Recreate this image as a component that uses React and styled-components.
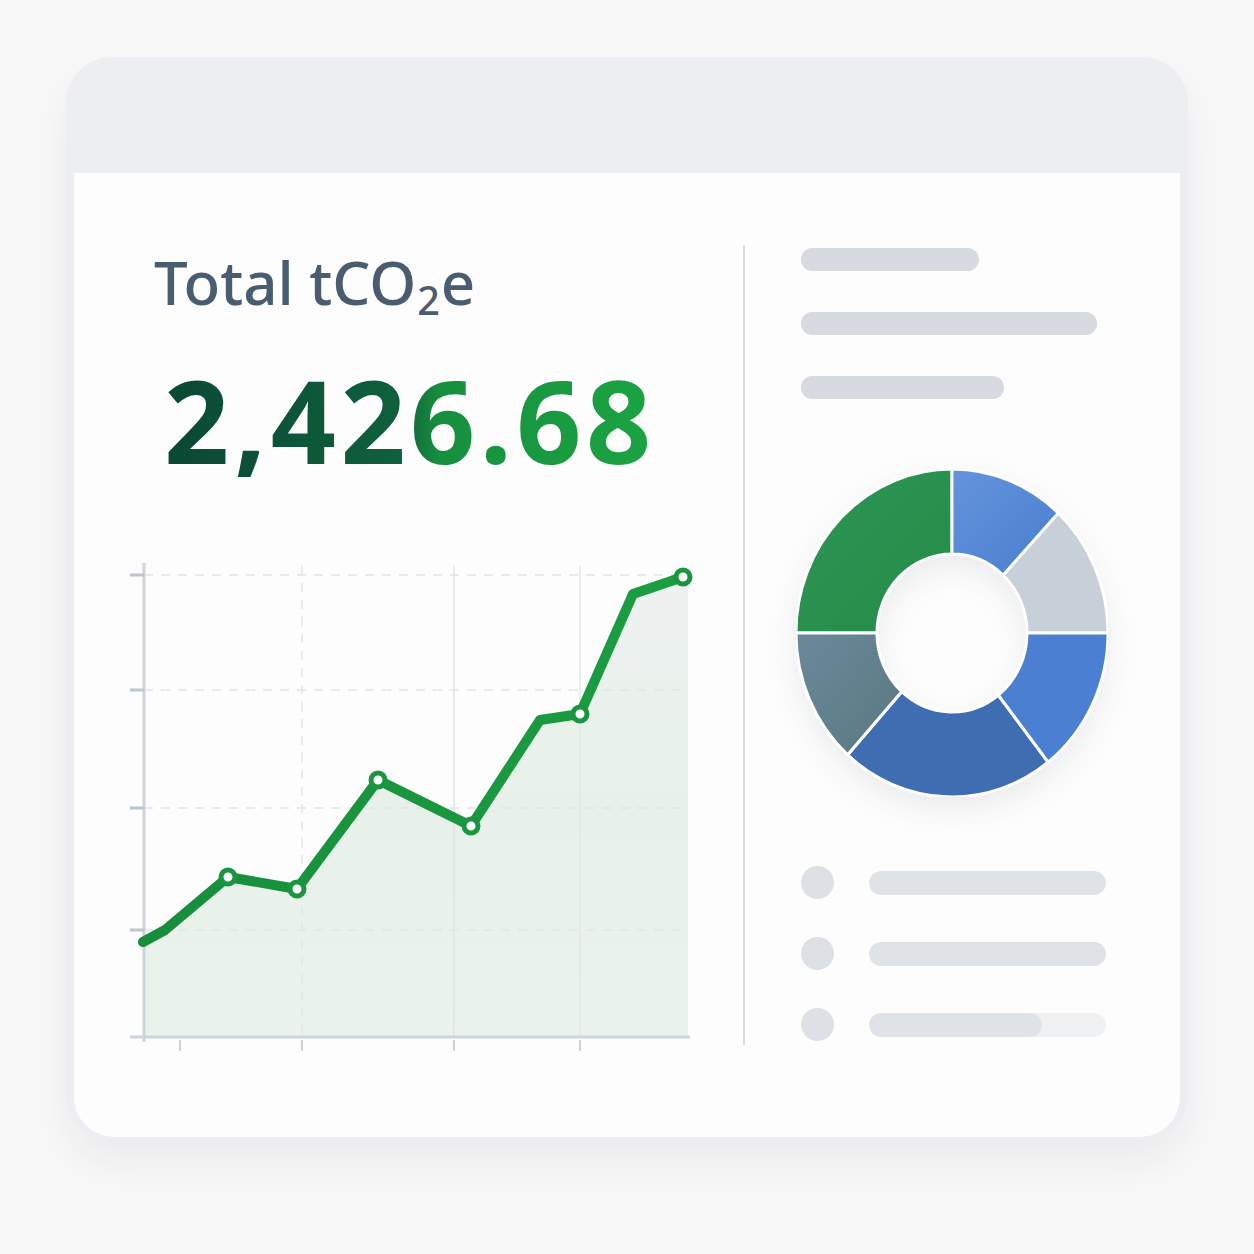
import styled, { createGlobalStyle } from 'styled-components'

const GlobalStyle = createGlobalStyle`
  html, body {
    margin: 0;
    padding: 0;
    background: #f8f8f9;
  }
  body {
    font-family: 'Noto Sans', 'Open Sans', sans-serif;
  }
`

const points = [
  [143, 942], [165, 930], [228, 877], [297, 889], [378, 780],
  [471, 826], [540, 720], [580, 714], [633, 594], [683, 577],
]
const markers = [2, 3, 4, 5, 7, 9]
const gridRows = [575, 690, 808, 930]
const xTicks = [180, 302, 454, 580]

const segments = [
  { from: 270, to: 360, fill: 'url(#segGreen)' },
  { from: 0, to: 43, fill: 'url(#segLight)' },
  { from: 43, to: 90, fill: '#c7cfd8' },
  { from: 90, to: 142, fill: '#4a7fd1' },
  { from: 142, to: 222, fill: '#3e6db2' },
  { from: 222, to: 270, fill: 'url(#segSlate)' },
]

const polar = (r, deg) => {
  const a = (deg * Math.PI) / 180
  return [r * Math.sin(a), -r * Math.cos(a)]
}

const arcPath = (from, to, r1, r2) => {
  const [x1, y1] = polar(r2, from)
  const [x2, y2] = polar(r2, to)
  const [x3, y3] = polar(r1, to)
  const [x4, y4] = polar(r1, from)
  const large = to - from > 180 ? 1 : 0
  return `M${x1} ${y1} A${r2} ${r2} 0 ${large} 1 ${x2} ${y2} L${x3} ${y3} A${r1} ${r1} 0 ${large} 0 ${x4} ${y4} Z`
}

const legend = [
  { fill: 100 },
  { fill: 100 },
  { fill: 73 },
]

const LineChart = () => {
  const line = points.map(p => p.join(',')).join(' ')
  const area = `M143,1036 L${line.replace(/ /g, ' L')} L688,577 L688,1036 Z`
  return (
    <ChartSvg width='580' height='500' viewBox='120 560 580 500'>
      <defs>
        <linearGradient id='areaFill' x1='0' y1='0' x2='0' y2='1'>
          <stop offset='0' stopColor='#eef1f1' />
          <stop offset='0.5' stopColor='#e7f1e9' />
          <stop offset='1' stopColor='#ebf4ec' />
        </linearGradient>
        <linearGradient id='lineStroke' x1='0' y1='0' x2='1' y2='0'>
          <stop offset='0' stopColor='#178d3c' />
          <stop offset='1' stopColor='#1b9e41' />
        </linearGradient>
      </defs>
      <path d={area} fill='url(#areaFill)' />
      {gridRows.map(y => (
        <line key={y} x1='144' y1={y} x2='688' y2={y} stroke='#e1e5e9' strokeWidth='1.5' strokeDasharray='9 8' />
      ))}
      <line x1='302' y1='566' x2='302' y2='1036' stroke='#e1e5e9' strokeWidth='1.5' strokeDasharray='9 8' />
      <line x1='454' y1='566' x2='454' y2='1036' stroke='#dfe3e8' strokeWidth='1.5' />
      <line x1='580' y1='566' x2='580' y2='1036' stroke='#e3e6ea' strokeWidth='1.5' />
      <line x1='144' y1='563' x2='144' y2='1042' stroke='#cdd4db' strokeWidth='3' />
      {gridRows.map(y => (
        <line key={y} x1='130' y1={y} x2='144' y2={y} stroke='#bcc6cc' strokeWidth='3' />
      ))}
      <line x1='130' y1='1037' x2='690' y2='1037' stroke='#cdd4db' strokeWidth='3' />
      {xTicks.map(x => (
        <line key={x} x1={x} y1='1040' x2={x} y2='1051' stroke='#ccd3da' strokeWidth='2' />
      ))}
      <polyline points={line} fill='none' stroke='url(#lineStroke)' strokeWidth='10' strokeLinejoin='round' strokeLinecap='round' />
      {markers.map(i => (
        <circle key={i} cx={points[i][0]} cy={points[i][1]} r='7' fill='#fff' stroke='#1a9640' strokeWidth='5' />
      ))}
    </ChartSvg>
  )
}

const Donut = () => (
  <DonutSvg width='312' height='328' viewBox='-160 -160 320 320' preserveAspectRatio='none'>
    <defs>
      <linearGradient id='segGreen' x1='0' y1='0' x2='1' y2='1'>
        <stop offset='0' stopColor='#2e9656' />
        <stop offset='1' stopColor='#238c47' />
      </linearGradient>
      <linearGradient id='segLight' x1='0' y1='0' x2='1' y2='1'>
        <stop offset='0' stopColor='#6594dc' />
        <stop offset='1' stopColor='#487dce' />
      </linearGradient>
      <linearGradient id='segSlate' x1='0' y1='0' x2='1' y2='1'>
        <stop offset='0' stopColor='#6c889b' />
        <stop offset='1' stopColor='#577a80' />
      </linearGradient>
    </defs>
    {segments.map(s => (
      <path key={s.from} d={arcPath(s.from, s.to, 77, 160)} fill={s.fill} stroke='#fff' strokeWidth='3' />
    ))}
  </DonutSvg>
)

const App = () => (
  <>
    <GlobalStyle />
    <Page>
      <Window>
        <TitleBar />
        <Content>
          <LeftPane>
            <Title>
              Total tCO<Sub>2</Sub>e
            </Title>
            <Figure>2,426.68</Figure>
            <LineChart />
          </LeftPane>
          <Divider />
          <RightPane>
            <Skeletons>
              <Bar $width={178} />
              <Bar $width={296} />
              <Bar $width={203} />
            </Skeletons>
            <Donut />
            <Legend>
              {legend.map((item, i) => (
                <LegendRow key={i}>
                  <Dot />
                  <Track>
                    <TrackFill style={{ width: `${item.fill}%` }} />
                  </Track>
                </LegendRow>
              ))}
            </Legend>
          </RightPane>
        </Content>
      </Window>
    </Page>
  </>
)

export default App

const Page = styled.div`
  width: 1254px;
  height: 1254px;
  box-sizing: border-box;
  padding: 57px 0 0 66px;
  background: #f8f8f9;
`

const Window = styled.div`
  width: 1122px;
  height: 1084px;
  box-sizing: border-box;
  display: flex;
  flex-direction: column;
  background: #eceef1;
  border-radius: 46px;
  padding: 0 8px 4px;
  box-shadow: 0 22px 40px rgba(30, 40, 50, 0.06);
`

const TitleBar = styled.div`
  height: 116px;
  flex-shrink: 0;
`

const Content = styled.div`
  flex: 1;
  display: flex;
  background: #fdfdfd;
  border-radius: 0 0 40px 40px;
`

const LeftPane = styled.div`
  width: 669px;
  display: flex;
  flex-direction: column;
  align-items: flex-start;
  padding-top: 79px;
`

const Title = styled.h1`
  margin: 0 0 0 80px;
  height: 60px;
  font-family: 'Noto Sans', sans-serif;
  font-size: 60px;
  line-height: 60px;
  font-weight: 500;
  color: #4a5c6f;
  letter-spacing: 0;
`

const Sub = styled.span`
  font-size: 0.66em;
  line-height: 0;
  position: relative;
  top: 0.24em;
  margin: 0 1px;
`

const Figure = styled.div`
  margin: 51px 0 0 90px;
  height: 114px;
  font-family: 'Noto Sans', sans-serif;
  font-size: 114px;
  line-height: 114px;
  font-weight: 700;
  letter-spacing: 4.5px;
  background: linear-gradient(90deg, #0a4834 0%, #0f603c 48%, #168f3e 56%, #1ba442 100%);
  -webkit-background-clip: text;
  background-clip: text;
  color: transparent;
`

const ChartSvg = styled.svg`
  display: block;
  margin: 83px 0 0 46px;
`

const Divider = styled.div`
  width: 2px;
  height: 800px;
  margin-top: 72px;
  background: #d6dbe0;
  border-radius: 1px;
`

const RightPane = styled.div`
  flex: 1;
  display: flex;
  flex-direction: column;
  padding: 75px 0 0 56px;
`

const Skeletons = styled.div`
  display: flex;
  flex-direction: column;
  gap: 41px;
  margin-bottom: 70px;
`

const Bar = styled.div`
  width: ${p => p.$width}px;
  height: 23px;
  border-radius: 12px;
  background: #d7dbe1;
`

const DonutSvg = styled.svg`
  display: block;
  margin-left: -5px;
  filter: drop-shadow(0 12px 14px rgba(30, 40, 60, 0.08));
`

const Legend = styled.div`
  display: flex;
  flex-direction: column;
  gap: 38px;
  margin-top: 69px;
`

const LegendRow = styled.div`
  display: flex;
  align-items: center;
  gap: 35px;
`

const Dot = styled.div`
  width: 33px;
  height: 33px;
  border-radius: 50%;
  background: #dde0e5;
`

const Track = styled.div`
  width: 237px;
  height: 24px;
  border-radius: 12px;
  background: #eff1f3;
  overflow: hidden;
`

const TrackFill = styled.div`
  height: 100%;
  border-radius: 12px;
  background: #dfe2e7;
`
